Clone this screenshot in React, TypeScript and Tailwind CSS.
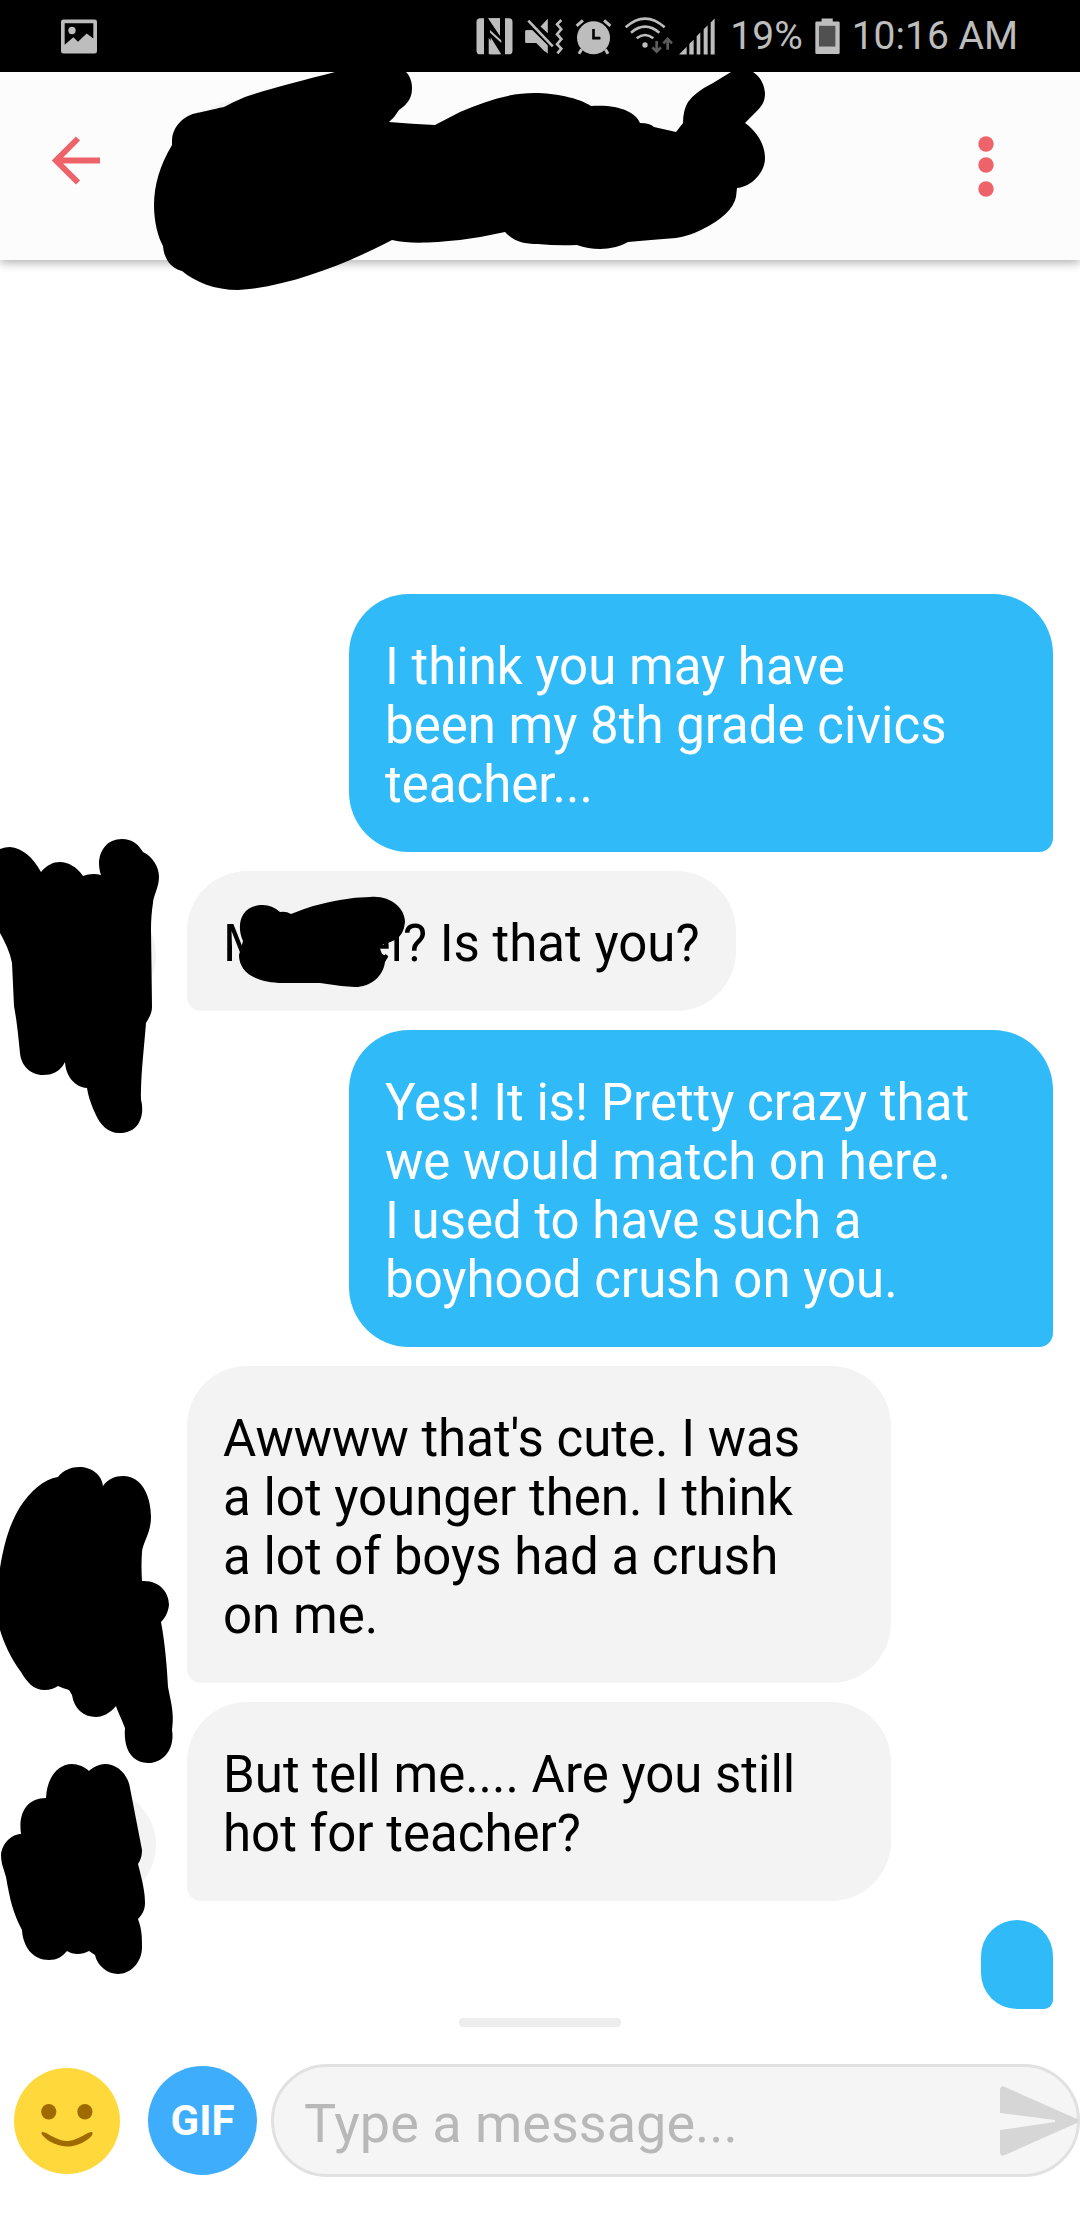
import React from "react";

function NfcIcon() {
  return (
    <svg viewBox="46 36 111 112" className="h-[37px] w-[37px]" fill="#bdbdbd" aria-label="NFC">
      <path d="M58 37h12v109h-12q-11 0-11-11V48q0-11 11-11z" />
      <path d="M80 37h38v54zM90 146V94l32 52zM88 70l34 34v8L88 78z" />
      <path d="M133 37h12q11 0 11 11v87q0 11-11 11h-12z" />
      <path d="M70 37h12l44 66V37h7v109h-7L84 84v62H70z" fill="#000" />
      <path d="M84 37h34v50zM84 96l34 50H84zM88 72l34 31v9L88 81z" />
    </svg>
  );
}

function MuteVibrateIcon() {
  return (
    <svg viewBox="192 36 115 112" className="h-[37px] w-[38px]" fill="#bdbdbd" aria-label="Sound off, vibrate">
      <path d="M197 73h17l47 45v26l-33-32h-31q-4 0-4-4V77q0-4 4-4zM239 62l22-24v44z" />
      <path d="M201 45l76 77" fill="none" stroke="#000" strokeWidth="18" />
      <path d="M202 44l74 78" fill="none" stroke="#bdbdbd" strokeWidth="8" />
      <path d="M197 73h17l40 41v26l-28-28h-29q-4 0-4-4V77q0-4 4-4z" />
      <path d="M302 42l-13 13 13 15-13 15 13 15-13 15 13 14-12 14" fill="none" stroke="#bdbdbd" strokeWidth="8" />
    </svg>
  );
}

function AlarmIcon() {
  return (
    <svg viewBox="343 36 110 112" className="h-[37px] w-[37px]" aria-label="Alarm set">
      <circle cx="398" cy="96" r="50" fill="#bdbdbd" />
      <g stroke="#bdbdbd" strokeWidth="9" fill="none">
        <path d="M347 60l19-17M449 60l-19-17M362 131l-8 13M434 131l8 13" />
      </g>
      <path d="M398 69v28h21" fill="none" stroke="#000" strokeWidth="8" />
    </svg>
  );
}

function WifiIcon() {
  return (
    <svg viewBox="42 32 147 114" className="h-[38px] w-[49px]" fill="none" aria-label="Wi-Fi">
      <g stroke="#bdbdbd" strokeWidth="8">
        <path d="M47 63q58-52 117 0M63 79q42-36 85 0M80 96q25-20 50 0" />
      </g>
      <circle cx="105" cy="116" r="8" fill="#bdbdbd" />
      <g stroke="#5c5c5c" strokeWidth="8">
        <path d="M140 104v30M127 123l13 13 13-13M173 130v-30M160 111l13-13 13 13" />
      </g>
    </svg>
  );
}

function SignalIcon() {
  return (
    <svg viewBox="208 34 108 110" className="h-[37px] w-[36px]" fill="#bdbdbd" aria-label="Signal strength">
      <path d="M208 143l23-23v23zM239 111l13-12v44h-13zM261 88l11-11v66h-11zM282 67l12-12v88h-12zM303 47l12-12v108h-12z" />
    </svg>
  );
}

function BatteryIcon() {
  return (
    <svg viewBox="608 37 76 111" className="h-[37px] w-[25px]" aria-label="Battery">
      <path d="M628 38h34v9h17q4 0 4 4v91q0 4-4 4h-66q-4 0-4-4V51q0-4 4-4h15z" fill="#bdbdbd" />
      <path d="M620 60h50v63h-50z" fill="#505050" />
    </svg>
  );
}

function StatusBar() {
  return (
    <div className="flex h-[72px] items-center justify-between bg-black pr-[62px] pl-[61px] text-[39px] leading-none text-[#bdbdbd]">
      <svg viewBox="184 55 108 102" className="h-[35px] w-[36px]" fill="#bdbdbd" aria-label="Image notification">
        <path
          fillRule="evenodd"
          d="M191 55h94q7 0 7 7v88q0 7-7 7h-94q-7 0-7-7V62q0-7 7-7zM195 66v65l26-23 14 14 26-25 20 15V66z"
        />
        <circle cx="217" cy="88" r="11" />
      </svg>
      <div className="flex items-center gap-3">
        <NfcIcon />
        <MuteVibrateIcon />
        <AlarmIcon />
        <div className="flex items-center gap-[6px] pr-[3px]">
          <WifiIcon />
          <SignalIcon />
        </div>
        <span>19%</span>
        <BatteryIcon />
        <span>10:16 AM</span>
      </div>
    </div>
  );
}

function Header() {
  return (
    <header className="relative z-10 flex h-[188px] items-center justify-between bg-[#fcfcfc] pr-[86px] pl-[51px] shadow-[0_3px_9px_rgba(0,0,0,0.3)]">
      <div className="flex items-center gap-[75px]">
        <button type="button" aria-label="Back" className="pb-3">
          <svg viewBox="0 0 49 49" className="h-[49px] w-[49px]" fill="none" stroke="#ed6369" strokeWidth="6">
            <path d="M49 24.500H5M27 2.500L5 24.500l22 22" />
          </svg>
        </button>
        <div className="h-[130px] w-[130px] rounded-full bg-[#f3f3f3]" />
      </div>
      <button type="button" aria-label="More options">
        <svg viewBox="0 0 16 61" className="h-[61px] w-[16px]" fill="#ed6369">
          <circle cx="8" cy="8" r="7.700" />
          <circle cx="8" cy="29" r="7.700" />
          <circle cx="8" cy="53" r="7.700" />
        </svg>
      </button>
      <svg viewBox="150 72 620 220" className="absolute top-0 left-[150px] h-[220px] w-[620px]" aria-hidden="true">
        <path d="M335 72C300 81 265 90 245 97Q233 102 224 107C210 110 197 113 197 113C185 115 173 125 172 140V145C160 165 154 185 154 205C154 222 158 237 163 246C164 258 170 268 182 271C195 282 215 290 238 290C290 287 350 262 392 240C410 244 430 243 460 240Q483 237 505 232C515 243 528 244 538 244Q557 246 577 245Q588 249 600 249Q616 249 628 242Q650 240 676 238Q689 236 701 230Q732 215 736 197L737 188C751 187 765 173 765 158C765 143 755 130 745 123C760 108 765 105 765 93C764 83 760 77 753 72H731L713 83Q695 92 688 102Q683 110 683 123L676 132L654 127Q650 123 640 123C636 112 618 104 591 106C579 98 555 93 535 93C507 93 484 102 460 112L435 125Q412 124 389 122Q395 117 399 110C409 103 412 97 412 88C412 82 410 76 406 72Z" />
      </svg>
    </header>
  );
}

type BubbleProps = { mine?: boolean; wide?: boolean; children?: React.ReactNode };

function Bubble({ mine, wide, children }: BubbleProps) {
  return (
    <div
      className={
        (mine
          ? "rounded-t-[60px] rounded-br-[14px] rounded-bl-[60px] bg-[#30baf8] text-white "
          : "rounded-t-[60px] rounded-br-[60px] rounded-bl-[14px] bg-[#f3f3f3] text-black ") +
        (wide ? "w-[704px] " : "") +
        "px-9 pt-[43px] pb-[38px] text-[51px] leading-[59px]"
      }
    >
      {children}
    </div>
  );
}

type ReceivedProps = { avatar?: boolean; wide?: boolean; mark: React.ReactNode; children: React.ReactNode };

function Received({ avatar, wide, mark, children }: ReceivedProps) {
  return (
    <li className="relative flex items-end gap-[31px] pl-11">
      <div className={avatar ? "h-[112px] w-[112px] rounded-full bg-[#f3f3f3]" : "h-[112px] w-[112px]"} />
      <Bubble wide={wide}>{children}</Bubble>
      {mark}
    </li>
  );
}

function Sent({ children }: { children: React.ReactNode }) {
  return (
    <li className="flex justify-end pr-[27px]">
      <Bubble mine wide>
        {children}
      </Bubble>
    </li>
  );
}

const markA = (
  <svg viewBox="0 837 180 298" className="absolute -top-[34px] left-0 h-[298px] w-[180px]" aria-hidden="true">
    <path d="M0 849Q5 847 10 847C22 848 33 857 41 872C47 865 53 862 60 862C68 862 77 867 83 876C88 874 95 873 101 875C95 858 103 839 122 839C132 839 138 844 143 852C153 857 159 867 159 877C159 887 153 897 153 903Q151 915 151 930L152 1007C152 1013 149 1018 146 1023C143 1060 141 1073 141 1100C144 1110 143 1133 119 1133C108 1133 100 1125 95 1113C90 1102 88 1094 87 1088C75 1087 66 1077 65 1062C60 1072 52 1075 43 1075C30 1075 21 1065 20 1053C17 1020 14 1006 14 1006L12 963L10 955C7 945 0 933 0 933Z" />
  </svg>
);

const markName = (
  <svg viewBox="235 890 175 100" className="absolute top-[19px] left-[235px] h-[100px] w-[175px]" aria-hidden="true">
    <path d="M243 941C236 926 240 905 263 905Q272 905 280 912Q286 911 291 914Q315 904 340 900Q355 897 370 897C390 895 405 908 405 922Q404 935 395 940L388 943L379 946L382 954L388 957L385 962C383 977 370 987 355 987Q338 986 320 983H283C257 983 239 973 239 955Z" />
  </svg>
);

const markB = (
  <svg viewBox="0 1465 180 300" className="absolute top-[99px] left-0 h-[300px] w-[180px]" aria-hidden="true">
    <path d="M0 1568C5 1537 12 1520 20 1507C30 1492 43 1479 58 1477C63 1470 72 1467 79 1467C92 1467 102 1475 103 1486C108 1479 115 1476 123 1476C143 1476 151 1498 151 1517C151 1533 143 1542 142 1552Q141 1566 142 1581C160 1580 169 1593 169 1605C168 1613 165 1618 161 1622C165 1643 167 1667 168 1687C172 1707 174 1713 172 1730C175 1747 165 1763 148 1763C135 1763 123 1753 125 1728C122 1720 117 1710 116 1706C110 1713 103 1717 96 1717C83 1717 74 1708 72 1695L69 1690Q62 1688 58 1686Q52 1690 45 1690C33 1690 27 1682 21 1672C10 1657 4 1643 0 1630Z" />
  </svg>
);

const markC = (
  <svg viewBox="0 1762 180 214" className="absolute top-[60px] left-0 h-[214px] w-[180px]" aria-hidden="true">
    <path d="M46 1798C47 1777 58 1764 72 1764C78 1764 85 1767 89 1771C93 1767 100 1764 105 1764C118 1764 128 1775 130 1788L142 1850C142 1857 140 1861 138 1864C143 1883 145 1893 145 1903C145 1910 142 1915 138 1919C142 1930 142 1937 142 1947C142 1963 130 1974 118 1974C107 1974 97 1965 95 1955L89 1951C82 1955 73 1955 67 1951C62 1957 57 1960 49 1960C33 1960 23 1947 22 1930C13 1913 10 1900 6 1877L2 1864Q1 1859 1 1855C2 1843 12 1834 21 1834C18 1813 27 1798 46 1798Z" />
  </svg>
);

function Composer() {
  return (
    <form className="flex items-center pl-[14px]" onSubmit={(e) => e.preventDefault()}>
      <button type="button" aria-label="Emoji" className="shrink-0">
        <svg viewBox="40 203 308 317" preserveAspectRatio="none" className="h-[106px] w-[106px]">
          <ellipse cx="194" cy="361.500" rx="154" ry="158.500" fill="#ffd83b" />
          <g fill="#9f6a00">
            <ellipse cx="141" cy="334" rx="22" ry="23" />
            <ellipse cx="246" cy="334" rx="22" ry="23" />
            <path d="M120 400C119 394 123 393 130 396C155 409 170 421 194 421C218 421 232 409 258 396C265 393 270 394 268 401C263 413 230 438 194 438C158 438 126 413 120 400Z" />
          </g>
        </svg>
      </button>
      <button
        type="button"
        className="ml-[28px] h-[109px] w-[109px] shrink-0 rounded-full bg-[#3dadfc] text-[42px] leading-none font-bold text-white"
      >
        GIF
      </button>
      <div className="ml-[14px] flex h-[113px] min-w-0 grow items-center rounded-full border-[3px] border-[#e1e1e1] bg-[#f5f5f5] pl-[30px]">
        <input
          type="text"
          aria-label="Message"
          placeholder="Type a message..."
          className="min-w-0 grow bg-transparent pt-[7px] text-[54px] leading-[64px] outline-none placeholder:text-[#b8b8b8]"
        />
        <button type="submit" aria-label="Send" className="-mr-0.5 shrink-0">
          <svg viewBox="0 0 79 70" className="h-[70px] w-[79px]" fill="#d6d6d6">
            <path d="M0 3Q1-1 5 1L77 33Q79 35 77 37L5 69Q1 71 0 67V44L55 36V34L0 27Z" />
          </svg>
        </button>
      </div>
    </form>
  );
}

export default function App() {
  return (
    <div className="flex min-h-screen flex-col overflow-hidden bg-white font-[Roboto,sans-serif]">
      <StatusBar />
      <Header />
      <main className="flex grow flex-col justify-end">
        <ul className="flex flex-col gap-[19px]">
          <Sent>
            I think you may have
            <br />
            been my 8th grade civics
            <br />
            teacher...
          </Sent>
          <Received
            avatar
            mark={
              <>
                {markA}
                {markName}
              </>
            }
          >
            M<span className="inline-block w-[96px]" />
            el? Is that you?
          </Received>
          <Sent>
            Yes! It is! Pretty crazy that
            <br />
            we would match on here.
            <br />I used to have such a
            <br />
            boyhood crush on you.
          </Sent>
          <Received wide mark={markB}>
            Awwww that's cute. I was
            <br />a lot younger then. I think
            <br />a lot of boys had a crush
            <br />
            on me.
          </Received>
          <Received avatar wide mark={markC}>
            But tell me.... Are you still
            <br />
            hot for teacher?
          </Received>
          <li className="mr-[27px] h-[89px] w-[72px] self-end rounded-t-[36px] rounded-br-[9px] rounded-bl-[36px] bg-[#30baf8]" />
        </ul>
      </main>
      <footer className="pt-[9px] pb-[43px]">
        <div className="mx-auto mb-[37px] h-[9px] w-[162px] rounded-[4px] bg-[#ededed]" />
        <Composer />
      </footer>
    </div>
  );
}
